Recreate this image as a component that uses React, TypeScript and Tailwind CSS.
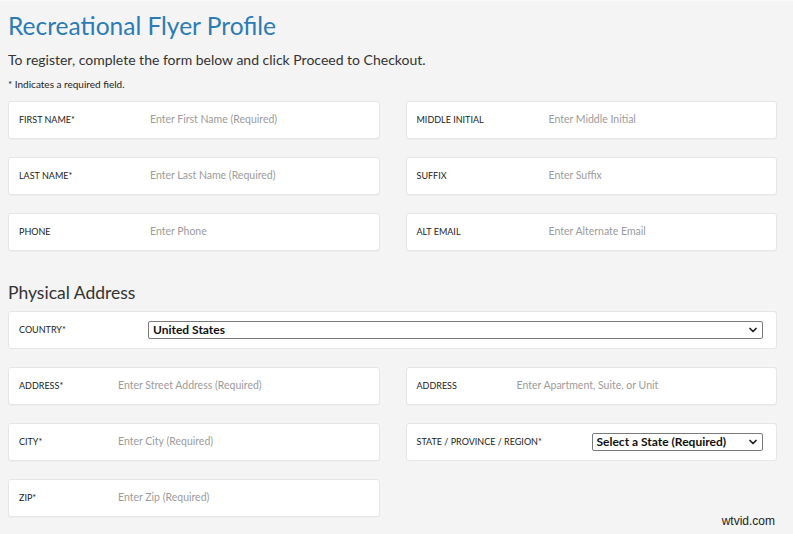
import { ChevronDown } from 'lucide-react'

type Field = { label: string; placeholder: string }

function InputCard({ label, placeholder, labelW }: Field & { labelW: string }) {
  return (
    <div className="h-[38px] bg-white border border-[#e6e6e6] rounded-[3px] flex items-center shadow-[0_1px_1px_rgba(0,0,0,0.03)]">
      <div className={`${labelW} shrink-0 pl-[10px] text-[9px] text-[#222] uppercase`}>{label}</div>
      <input
        className="flex-1 min-w-0 bg-transparent outline-none text-[10.5px] text-[#333] placeholder:text-[#9b9b9b]"
        placeholder={placeholder}
      />
    </div>
  )
}

function FakeSelect({ value, className }: { value: string; className: string }) {
  return (
    <div
      className={`${className} h-[18px] border border-[#7a7a7a] rounded-[2px] bg-white flex items-center justify-between pl-[4px] pr-[3px]`}
    >
      <span className="text-[12px] font-bold text-[#111] leading-none">{value}</span>
      <ChevronDown className="h-3 w-3 text-[#222]" strokeWidth={3.5} />
    </div>
  )
}

export default function App() {
  return (
    <div
      className="relative w-[793px] h-[534px] overflow-hidden bg-[#f4f4f4] border-t border-[#fafafa] pl-2 pr-4"
      style={{ fontFamily: 'Lato, "Open Sans", sans-serif' }}
    >
      <h1 className="mt-[9px] text-[24.5px] leading-[32px] text-[#2b7bb6]">Recreational Flyer Profile</h1>
      <p className="mt-[9px] text-[14px] leading-[18px] text-[#333]">
        To register, complete the form below and click Proceed to Checkout.
      </p>
      <p className="mt-[9px] text-[10px] leading-[13px] text-[#222]">* Indicates a required field.</p>

      {/* Personal info */}
      <div className="mt-[10px] grid grid-cols-2 gap-x-[26px] gap-y-[18px]">
        <InputCard labelW="w-[141px]" label="First Name*" placeholder="Enter First Name (Required)" />
        <InputCard labelW="w-[142px]" label="Middle Initial" placeholder="Enter Middle Initial" />
        <InputCard labelW="w-[141px]" label="Last Name*" placeholder="Enter Last Name (Required)" />
        <InputCard labelW="w-[142px]" label="Suffix" placeholder="Enter Suffix" />
        <InputCard labelW="w-[141px]" label="Phone" placeholder="Enter Phone" />
        <InputCard labelW="w-[142px]" label="Alt Email" placeholder="Enter Alternate Email" />
      </div>

      {/* Physical Address */}
      <h2 className="mt-[31px] text-[17.5px] leading-[22px] text-[#333]">Physical Address</h2>
      <div className="mt-[7px] h-[38px] bg-white border border-[#e6e6e6] rounded-[3px] flex items-center">
        <div className="w-[139px] shrink-0 pl-[10px] text-[9px] text-[#222] uppercase">Country*</div>
        <FakeSelect value="United States" className="flex-1 mr-[13px]" />
      </div>

      <div className="mt-[18px] grid grid-cols-2 gap-x-[26px] gap-y-[18px]">
        <InputCard labelW="w-[109px]" label="Address*" placeholder="Enter Street Address (Required)" />
        <InputCard labelW="w-[110px]" label="Address" placeholder="Enter Apartment, Suite, or Unit" />
        <InputCard labelW="w-[109px]" label="City*" placeholder="Enter City (Required)" />
        <div className="h-[38px] bg-white border border-[#e6e6e6] rounded-[3px] flex items-center">
          <div className="w-[185px] shrink-0 pl-[10px] text-[9px] text-[#222] uppercase">State / Province / Region*</div>
          <FakeSelect value="Select a State (Required)" className="flex-1 mr-[13px]" />
        </div>
        <InputCard labelW="w-[109px]" label="Zip*" placeholder="Enter Zip (Required)" />
      </div>

      <div className="absolute right-[18px] bottom-[4px] text-[12px] text-[#222]" style={{ fontFamily: '"Liberation Sans", sans-serif' }}>
        wtvid.com
      </div>
    </div>
  )
}
